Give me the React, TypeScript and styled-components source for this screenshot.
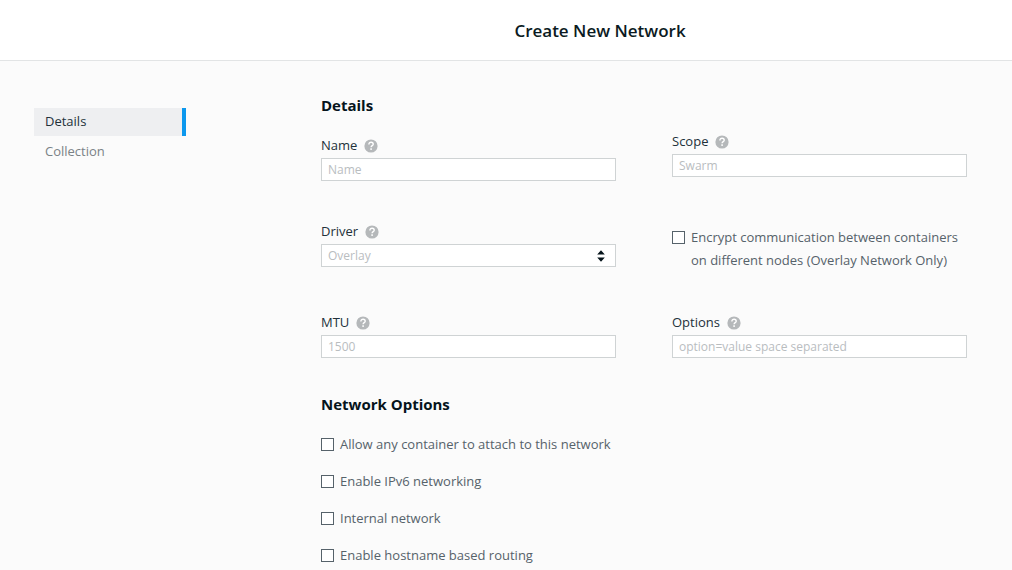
import React from "react";
import styled, { createGlobalStyle } from "styled-components";

const GlobalStyle = createGlobalStyle`
  *, *::before, *::after { box-sizing: border-box; }
  body {
    margin: 0;
    background: #fbfbfb;
    color: #22313a;
    font-family: "Open Sans", "Noto Sans", sans-serif;
    font-size: 13px;
    line-height: 20px;
  }
`;

const Header = styled.header`
  display: flex;
  align-items: center;
  justify-content: center;
  height: 61px;
  padding: 2px 0 0 188px;
  background: #fff;
  border-bottom: 1px solid #e2e4e5;
`;

const Title = styled.h1`
  margin: 0;
  font-size: 17px;
  font-weight: 600;
  line-height: 24px;
  color: #0b1a22;
`;

const Page = styled.div`
  display: flex;
  align-items: flex-start;
  padding: 0 45px 0 34px;
`;

const Sidebar = styled.nav`
  display: flex;
  flex: none;
  flex-direction: column;
  gap: 2px;
  width: 152px;
  margin-top: 47px;
`;

const NavLink = styled.a<{ $active?: boolean }>`
  padding: 3px 11px 5px;
  color: ${(p) => (p.$active ? "#22313a" : "#7a8286")};
  background: ${(p) => (p.$active ? "#eeeff1" : "transparent")};
  border-right: 4px solid ${(p) => (p.$active ? "#0c98ee" : "transparent")};
  text-decoration: none;
`;

const Form = styled.form`
  flex: 1;
  min-width: 0;
  margin-left: 135px;
  padding: 34px 0 0;
`;

const SectionTitle = styled.h2`
  margin: 0;
  font-size: 15px;
  font-weight: 700;
  line-height: 20px;
  color: #06141b;
`;

const FieldGrid = styled.div`
  display: grid;
  grid-template-columns: 1fr 1fr;
  gap: 40px 56px;
  margin: 16px 0 36px;
`;

const FieldBox = styled.div<{ $end?: boolean }>`
  display: flex;
  flex-direction: column;
  gap: 3px;
  padding-top: ${(p) => (p.$end ? "4px" : "0")};
`;

const LabelRow = styled.div`
  display: flex;
  align-items: center;
  gap: 7px;
`;

const HelpButton = styled.button`
  display: flex;
  padding: 1px 0 0;
  border: 0;
  background: none;
`;

const TextInput = styled.input`
  width: 100%;
  height: 23px;
  padding: 0 6px;
  border: 1px solid #cfd3d4;
  border-radius: 0;
  background: #fff;
  color: #22313a;
  font: inherit;
  font-size: 12px;
  &::placeholder { color: #b9bdbf; opacity: 1; }
`;

const SelectWrap = styled.div`
  display: grid;
  align-items: center;
  & > * { grid-area: 1 / 1; }
  & > svg { justify-self: end; margin-right: 11px; pointer-events: none; }
`;

const Select = styled.select`
  appearance: none;
  width: 100%;
  height: 23px;
  padding: 0 24px 0 6px;
  border: 1px solid #cfd3d4;
  border-radius: 0;
  background: #fff;
  color: #b9bdbf;
  font: inherit;
  font-size: 12px;
`;

const CheckLabel = styled.label`
  display: flex;
  align-items: flex-start;
  gap: 6px;
  line-height: 23px;
  color: #56626a;
`;

const EncryptCell = styled.div`
  padding-top: 5px;
`;

const Checkbox = styled.input`
  appearance: none;
  flex: none;
  width: 13px;
  height: 13px;
  margin: 5px 0;
  border: 1px solid #56626a;
  background: #fff;
  &:checked { background: #0c98ee; }
`;

const OptionList = styled.div`
  display: flex;
  flex-direction: column;
  gap: 14px;
  margin-top: 19px;
`;

function Help({ topic }: { topic: string }) {
  return (
    <HelpButton type="button" aria-label={`Help about ${topic}`}>
      <svg width="14" height="14" viewBox="0 0 14 14" aria-hidden="true">
        <circle cx="7" cy="7" r="6.6" fill="#b5b8ba" />
        <path d="M4.9 5.4C4.9 4 5.8 3.3 7.1 3.3C8.4 3.3 9.2 4.1 9.2 5.2C9.2 6.7 7.1 6.6 7.1 8.3" fill="none" stroke="#fff" strokeWidth="1.4" />
        <rect x="6.3" y="9.3" width="1.6" height="1.6" fill="#fff" />
      </svg>
    </HelpButton>
  );
}

type FieldProps = { id: string; label: string; end?: boolean; children: React.ReactNode };

function Field({ id, label, end, children }: FieldProps) {
  return (
    <FieldBox $end={end}>
      <LabelRow>
        <label htmlFor={id}>{label}</label>
        <Help topic={label} />
      </LabelRow>
      {children}
    </FieldBox>
  );
}

function Check({ children }: { children: React.ReactNode }) {
  return (
    <CheckLabel>
      <Checkbox type="checkbox" />
      <span>{children}</span>
    </CheckLabel>
  );
}

const networkOptions = [
  "Allow any container to attach to this network",
  "Enable IPv6 networking",
  "Internal network",
  "Enable hostname based routing",
];

export default function App() {
  return (
    <>
      <GlobalStyle />
      <Header>
        <Title>Create New Network</Title>
      </Header>
      <Page>
        <Sidebar>
          <NavLink href="#details" $active>Details</NavLink>
          <NavLink href="#collection">Collection</NavLink>
        </Sidebar>
        <Form>
          <SectionTitle id="details">Details</SectionTitle>
          <FieldGrid>
            <Field id="name" label="Name" end>
              <TextInput id="name" placeholder="Name" />
            </Field>
            <Field id="scope" label="Scope">
              <TextInput id="scope" placeholder="Swarm" />
            </Field>
            <Field id="driver" label="Driver">
              <SelectWrap>
                <Select id="driver">
                  <option>Overlay</option>
                </Select>
                <svg width="8" height="12" viewBox="0 0 8 12" aria-hidden="true">
                  <path d="M4 0.3L7.8 4.4H0.2ZM4 11.7L7.8 7.6H0.2Z" fill="#06141b" />
                </svg>
              </SelectWrap>
            </Field>
            <EncryptCell>
              <Check>Encrypt communication between containers on different nodes (Overlay Network Only)</Check>
            </EncryptCell>
            <Field id="mtu" label="MTU">
              <TextInput id="mtu" placeholder="1500" />
            </Field>
            <Field id="options" label="Options">
              <TextInput id="options" placeholder="option=value space separated" />
            </Field>
          </FieldGrid>
          <SectionTitle>Network Options</SectionTitle>
          <OptionList>
            {networkOptions.map((text) => (
              <Check key={text}>{text}</Check>
            ))}
          </OptionList>
        </Form>
      </Page>
    </>
  );
}
